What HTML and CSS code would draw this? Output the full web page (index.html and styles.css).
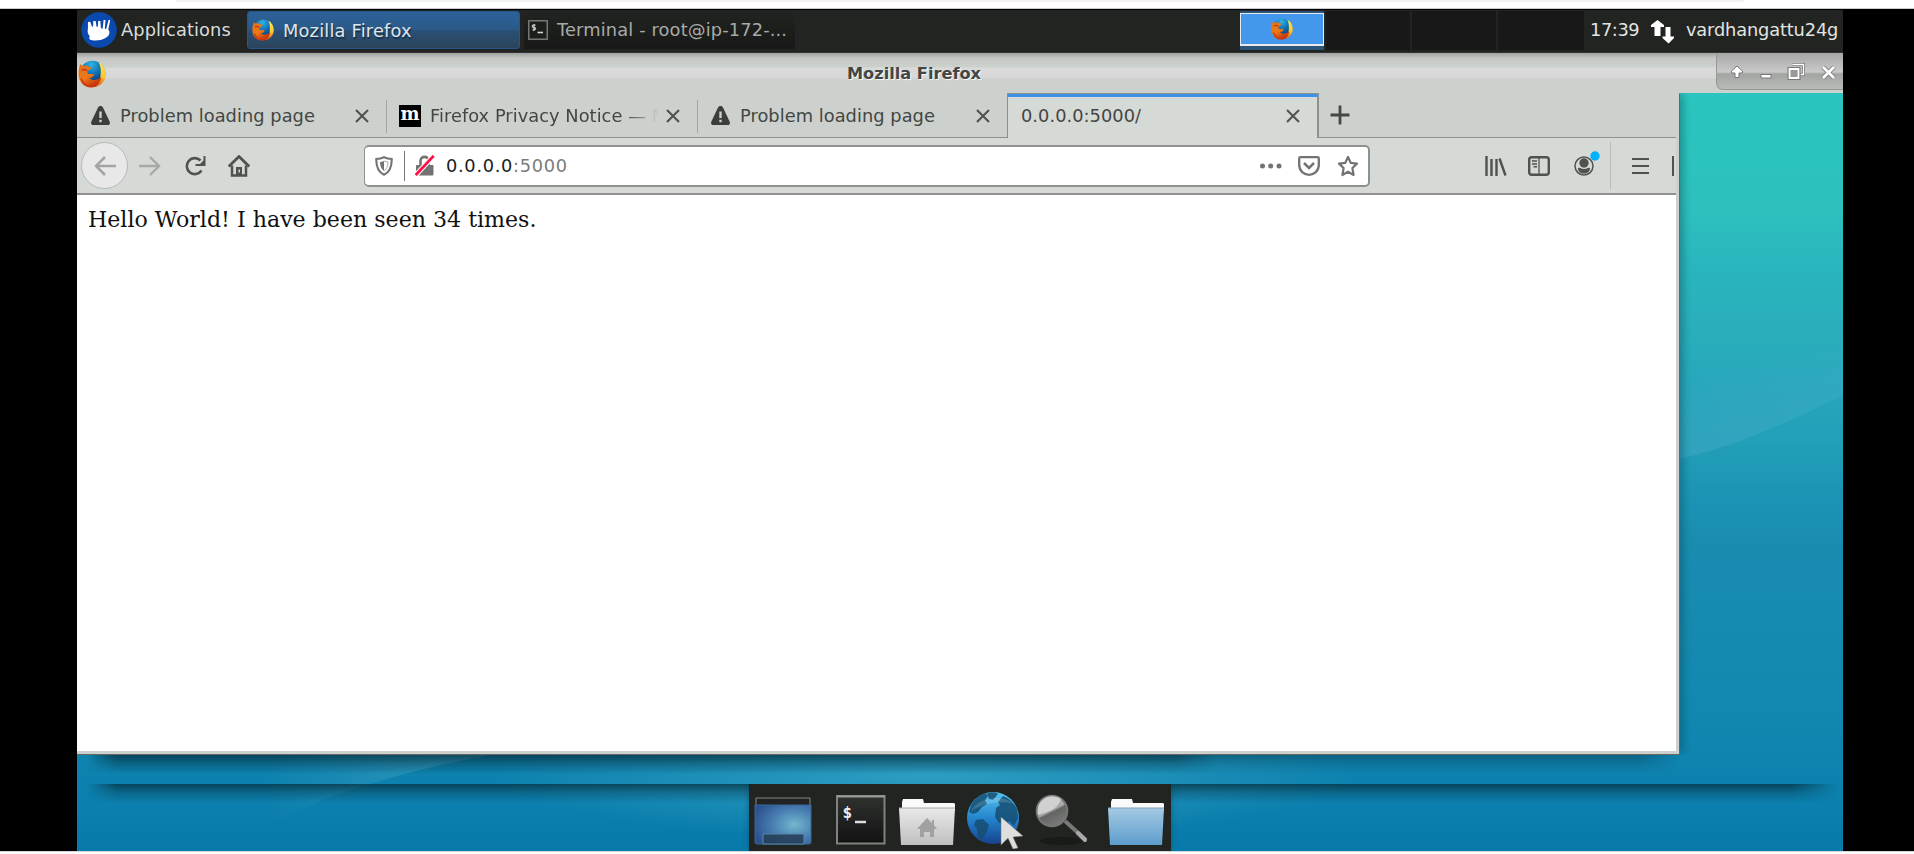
FILE: index.html
```html
<!DOCTYPE html>
<html lang="en">
<head>
<meta charset="utf-8">
<title>Mozilla Firefox</title>
<link rel="stylesheet" href="styles.css">
</head>
<body>
<svg width="0" height="0" class="defs" aria-hidden="true">
  <defs>
    <radialGradient id="fxBlue" cx=".45" cy=".15" r=".8"><stop offset="0" stop-color="#2fb5e6"/><stop offset=".5" stop-color="#0f6db0"/><stop offset="1" stop-color="#0a2c62"/></radialGradient>
    <linearGradient id="fxFire" x1="0" y1="0" x2=".6" y2="1"><stop offset="0" stop-color="#e0701c"/><stop offset=".55" stop-color="#ee7a16"/><stop offset="1" stop-color="#c2300f"/></linearGradient>
    <linearGradient id="fxTail" x1="0" y1="0" x2="0" y2="1"><stop offset="0" stop-color="#ffe95a"/><stop offset=".6" stop-color="#fbc52c"/><stop offset="1" stop-color="#dc4a12"/></linearGradient>
    <symbol id="firefox" viewBox="0 0 28 28">
      <circle cx="14.500" cy="13.500" r="12.800" fill="url(#fxBlue)"/>
      <path d="M20.500 2C28 6 30 16 25 22c-3 4-8 6-13 5 6-2 10-5 10.500-11C23 11 23 6 20.500 2z" fill="url(#fxTail)"/>
      <path d="M2.500 4L4.500 6C7 5 9 5.500 10.500 6.700L13.500 7c-.5 2-2 3-3.500 3.700l-.6 3.100c2 .8 4.500-.4 7 .8-1 1.800-2.400 3.400-5 3.600 2.600 2.600 8 2.400 12-1.200-1.200 6.500-5.500 11-11.500 10.500C5.500 27 .7 21.500.5 14.500.4 10.500 1 7 2.500 4z" fill="url(#fxFire)"/>
      <path d="M3 18.500c2 5.500 6 8 11 7.500M4 10c2-1 4-.5 5.500 1" fill="none" stroke="#c93511" stroke-width="1.500"/>
    </symbol>
    <symbol id="warn" viewBox="0 0 19 19">
      <path d="M9.500 0c1.300 0 2 .6 2.600 1.800l6.500 13.700c.8 1.900.1 3.500-1.800 3.500H2.200C.3 19-.4 17.400.4 15.500L6.900 1.800C7.500.6 8.200 0 9.500 0z" fill="#3a3f3b"/>
      <path d="M8.300 5.500h2.400v6.500H8.300zM8.300 13.700h2.400v2.500H8.300z" fill="#cdd1cd"/>
    </symbol>
    <symbol id="close" viewBox="0 0 14 14"><path d="M1 1l12 12M13 1L1 13" stroke="#505350" stroke-width="2.100" fill="none"/></symbol>
    <symbol id="smallterm" viewBox="0 0 20 20">
      <rect x=".8" y=".8" width="18.400" height="18.400" fill="#1c1e1c" stroke="#858785" stroke-width="1.300"/>
      <path d="M7.500 5.200H5.300c-1.300 0-1.300 2 0 2.200s2.400.2 2.200 1.400-.9 1-3 .9M6 4v7" stroke="#c4c6c4" stroke-width="1.300" fill="none"/><path d="M9.500 12.500h5.500" stroke="#d5d7d5" stroke-width="1.600"/>
    </symbol>
    <linearGradient id="white" x1="0" y1="0" x2="0" y2="1"><stop offset="0" stop-color="#e9e9e9"/><stop offset="1" stop-color="#bfbfbf"/></linearGradient>
    <linearGradient id="blue" x1="0" y1="0" x2="0" y2="1"><stop offset="0" stop-color="#a3cae3"/><stop offset="1" stop-color="#5d9dcd"/></linearGradient>
    <radialGradient id="desk" cx=".7" cy=".5" r=".75"><stop offset="0" stop-color="#72b9cc"/><stop offset=".5" stop-color="#4b80b4"/><stop offset="1" stop-color="#2b528f"/></radialGradient>
    <linearGradient id="earth" x1="0" y1="0" x2="0" y2="1"><stop offset="0" stop-color="#56c4ee"/><stop offset=".5" stop-color="#2485ce"/><stop offset="1" stop-color="#17418d"/></linearGradient>
    <linearGradient id="lens" x1=".2" y1="0" x2=".7" y2="1"><stop offset="0" stop-color="#d5d5d5"/><stop offset=".5" stop-color="#a5a5a5"/><stop offset=".56" stop-color="#626462"/><stop offset="1" stop-color="#7b7c7b"/></linearGradient>
    <linearGradient id="termbg" x1="0" y1="0" x2="0" y2="1"><stop offset="0" stop-color="#303230"/><stop offset="1" stop-color="#111211"/></linearGradient>
    <linearGradient id="rayR" gradientUnits="userSpaceOnUse" x1="1630" y1="442" x2="1610" y2="360"><stop offset="0" stop-color="#65b6d0" stop-opacity=".24"/><stop offset="1" stop-color="#65b6d0" stop-opacity="0"/></linearGradient>
    <linearGradient id="rayL" x1="0" y1="0" x2="1" y2="0"><stop offset="0" stop-color="#65b6d0" stop-opacity="0"/><stop offset="1" stop-color="#65b6d0" stop-opacity=".42"/></linearGradient>
    <radialGradient id="glow"><stop offset="0" stop-color="#39a6c8" stop-opacity=".75"/><stop offset="1" stop-color="#39a6c8" stop-opacity="0"/></radialGradient>
  </defs>
</svg>

<div class="strip"><div class="strip-bar"></div></div>
<div class="screen">
  <svg class="wallpaper" viewBox="0 0 1766 841" aria-hidden="true">
    <path d="M1603 449C1640 440 1690 424 1766 385V340H1603z" fill="url(#rayR)"/>
    <path d="M190 815C250 785 320 762 413 745L190 700z" fill="url(#rayL)"/>
    <ellipse cx="850" cy="765" rx="430" ry="65" fill="url(#glow)"/>
  </svg>

  <header class="panel">
    <div class="apps">
      <svg width="36" height="36" viewBox="0 0 36 36"><circle cx="18" cy="18" r="17.800" fill="#0b49ae"/><path d="M7 10l2.200-.3 1.800 5 1-.2L12.300 9h2.400l.8 5.800 1.300-.1L17.200 9h2.200l.5 7 1.700 1L22.600 8h1.900l-.7 8.800 1.400.3L27.500 8h1.700l-1.900 9.600c2.200 2.900 1.200 6-2.300 8.200-4 2.500-8 2.900-12.600 2.700-3.500-.2-4.800-1.200-3.700-4.200-2.100-3-2.500-4.400-1.800-7.300z" fill="#fff"/></svg>
      <span class="t-apps">Applications</span>
    </div>
    <div class="task active"><svg width="22" height="22"><use href="#firefox"/></svg><span>Mozilla Firefox</span></div>
    <div class="task"><svg width="20" height="20"><use href="#smallterm"/></svg><span class="t-term">Terminal - root@ip-172-...</span></div>
    <div class="pager">
      <div class="cell current"><div class="mini"><svg width="22" height="22"><use href="#firefox"/></svg></div></div>
      <div class="cell"></div><div class="cell"></div><div class="cell last"></div>
    </div>
    <span class="clock">17:39</span>
    <svg class="net" width="24" height="24" viewBox="0 0 24 24"><path d="M6.500 0l6.500 5v2H9.500v9h-6V7H0V5zM14.500 7h5v9.500H23V18l-5.500 5.500L11.500 18v-1.500h3z" fill="#fff"/></svg>
    <span class="user">vardhangattu24g</span>
  </header>

  <div class="titlebar">
    <svg class="ticon" width="28" height="28"><use href="#firefox"/></svg>
    <span class="title">Mozilla Firefox</span>
    <div class="controls">
      <svg width="14" height="14" viewBox="0 0 14 14"><path d="M7 1l5.500 5v2H9v4.500H5V8H1.500V6z" fill="#fff" stroke="#777" stroke-width="1"/></svg>
      <svg width="12" height="14" viewBox="0 0 12 14"><path d="M1 9.500h10v3.500H1z" fill="#fff" stroke="#777" stroke-width="1"/></svg>
      <svg width="18" height="18" viewBox="0 0 18 18"><path d="M5.500 1.500h11v10h-3" fill="none" stroke="#777" stroke-width="3"/><path d="M5.500 1.500h11v10h-3" fill="none" stroke="#fff" stroke-width="1.400"/><path d="M2.500 6h9v9h-9z" fill="none" stroke="#777" stroke-width="4"/><path d="M2.500 6h9v9h-9z" fill="#999" stroke="#fff" stroke-width="1.800"/></svg>
      <svg width="15" height="15" viewBox="0 0 15 15"><path d="M2 2l11 11M13 2L2 13" stroke="#777" stroke-width="4.500"/><path d="M2 2l11 11M13 2L2 13" stroke="#fff" stroke-width="2.800"/></svg>
    </div>
  </div>

  <main class="window">
    <div class="tabs">
      <div class="tab first"><svg width="19" height="19"><use href="#warn"/></svg><span>Problem loading page</span><svg class="x" width="14" height="14"><use href="#close"/></svg></div>
      <div class="tab second"><div class="moz">m</div><span class="fade">Firefox Privacy Notice — Mozilla</span><svg class="x" width="14" height="14"><use href="#close"/></svg></div>
      <div class="tab third"><svg width="19" height="19"><use href="#warn"/></svg><span>Problem loading page</span><svg class="x" width="14" height="14"><use href="#close"/></svg></div>
      <div class="tab selected"><span>0.0.0.0:5000/</span><svg class="x" width="14" height="14"><use href="#close"/></svg></div>
      <svg class="plus" width="20" height="20" viewBox="0 0 20 20"><path d="M10 .500v19M.5 10h19" stroke="#454845" stroke-width="2.800"/></svg>
    </div>
    <div class="nav">
      <div class="back"><svg width="22" height="20" viewBox="0 0 22 20"><path d="M22 10H2M11 1L2 10l9 9" fill="none" stroke="#a2a4a2" stroke-width="2.500"/></svg></div>
      <svg class="fwd" width="22" height="20" viewBox="0 0 22 20"><path d="M0 10h20M11 1l9 9-9 9" fill="none" stroke="#a6a9a6" stroke-width="2.400"/></svg>
      <svg class="reload" width="21" height="20" viewBox="0 0 21 20"><path d="M16.500 14.500A8 8 0 1 1 15.500 4.500" fill="none" stroke="#505250" stroke-width="2.600"/><path d="M19.500 0v9h-9" fill="none" stroke="#505250" stroke-width="2"/><path d="M20 3v6h-6z" fill="#505250"/></svg>
      <svg class="home" width="22" height="22" viewBox="0 0 22 22"><path d="M.8 11.500L11 1.500l10.200 10" fill="none" stroke="#505250" stroke-width="2.800"/><path d="M4 10.500v10h14v-10" fill="none" stroke="#505250" stroke-width="2.500"/><path d="M8 12h6v8H8z" fill="#505250"/><path d="M10.500 14.500h1.500v3h-1.500z" fill="#d6dad6"/></svg>
      <div class="url">
        <svg class="shield" width="18" height="20" viewBox="0 0 18 20"><path d="M9 1.200c2.500 1.200 4.800 1.700 7.700 1.800C16.900 10 15.500 15.500 9 18.700 2.500 15.500 1.100 10 1.300 3 4.200 2.900 6.500 2.400 9 1.200z" fill="none" stroke="#737373" stroke-width="2.100"/><path d="M9 5c-1.400.6-2.700.9-4 1 .1 4 1.200 7 4 8.900z" fill="#737373"/><path d="M9 5c1.400.6 2.700.9 4 1-.1 4-1.200 7-4 8.900" fill="none" stroke="#aaa" stroke-width="1"/></svg>
        <i class="rule"></i>
        <svg class="lock" width="20" height="21" viewBox="0 0 20 21"><path d="M5.500 10V6c0-5.500 8-5.500 8 0v4" fill="none" stroke="#737373" stroke-width="2.600"/><path d="M2 10h15.500c.8 0 1 .4 1 1v8c0 .8-.4 1.500-1.200 1.500H2c-.8 0-1-.5-1-1.200V11c0-.7.300-1 1-1z" fill="#737373"/><path d="M1 19.800L18.500 1" stroke="#fff" stroke-width="5"/><path d="M.7 20L18.700.8" stroke="#ff0f45" stroke-width="2.700"/></svg>
        <span class="addr">0.0.0.0<span class="port">:5000</span></span>
        <svg class="dots" width="22" height="6" viewBox="0 0 22 6"><circle cx="2.500" cy="3" r="2.500" fill="#737373"/><circle cx="10.700" cy="3" r="2.500" fill="#737373"/><circle cx="19" cy="3" r="2.500" fill="#737373"/></svg>
        <svg class="pocket" width="22" height="20" viewBox="0 0 22 20"><path d="M2.500 1.200h17c.8 0 1.300.5 1.300 1.300V9C20.800 15 16 18.800 11 18.800S1.200 15 1.200 9V2.500c0-.8.500-1.300 1.300-1.300z" fill="none" stroke="#737373" stroke-width="2.300"/><path d="M6 7l5 5 5-5" fill="none" stroke="#737373" stroke-width="2.500"/></svg>
        <svg class="star" width="22" height="22" viewBox="0 0 22 22"><path d="M11 2l2.700 5.800 6.300.8-4.600 4.400 1.200 7L11 16.800 5.400 20l1.200-7L2 8.600l6.300-.8z" fill="none" stroke="#737373" stroke-width="2.200" stroke-linejoin="round"/></svg>
      </div>
      <svg class="library" width="22" height="20" viewBox="0 0 22 20"><path d="M1.500 0v20M6.500 3v17M11.500 3v17M14.500 2.500l6 17" fill="none" stroke="#505250" stroke-width="2.400"/></svg>
      <svg class="side" width="22" height="20" viewBox="0 0 22 20"><rect x="1.200" y="1.200" width="19.600" height="17.600" rx="2.500" fill="none" stroke="#505250" stroke-width="2.400"/><path d="M11 1v18" stroke="#505250" stroke-width="1.300"/><path d="M4 5h5M4 8h5M5.500 10.700H9" stroke="#505250" stroke-width="1.400"/></svg>
      <svg class="account" width="26" height="25" viewBox="0 0 26 25"><circle cx="10" cy="15" r="9" fill="none" stroke="#505250" stroke-width="1.500"/><circle cx="10" cy="12" r="4.700" fill="#505250"/><path d="M4 17c2-1 3 1 6 1s4-2 6-1c0 4-3 5.500-6 5.500S4 21 4 17z" fill="#505250"/><circle cx="21" cy="5" r="4.700" fill="#00b3ff"/></svg>
      <i class="navrule"></i>
      <svg class="menu" width="17" height="18" viewBox="0 0 17 18"><path d="M0 2h17M0 9h17M0 16h17" stroke="#505250" stroke-width="2"/></svg>
      <i class="cut"></i>
    </div>
    <div class="page">Hello World! I have been seen 34 times.</div>
  </main>

  <div class="gap"><div class="shade wide"></div><div class="shade short"></div></div>
  <footer class="bottom">
    <div class="shade edge"></div>
    <div class="dock">
      <svg width="58" height="50" viewBox="0 0 58 50"><path d="M2 1h54v8H2z" fill="#222" stroke="#888" stroke-width="1"/><path d="M1 8h56v37q0 2-2 2H3q-2 0-2-2z" fill="url(#desk)" stroke="#3b6799"/><path d="M9 37h41v10H9z" fill="#263d55" fill-opacity=".85" stroke="#5789aa" stroke-width="1"/></svg>
      <svg class="d-term" width="50" height="50" viewBox="0 0 50 50"><rect x="1" y="1" width="47.500" height="47.500" fill="url(#termbg)" stroke="#808280" stroke-width="2"/><path d="M1 1.500h48" stroke="#9a9c9a" stroke-width="2"/><text x="6.500" y="23" class="dollar">$</text><path d="M19 27h11" stroke="#ddd" stroke-width="2.500"/></svg>
      <svg class="d-home" width="58" height="50" viewBox="0 0 58 50"><path d="M4 13V4l1-3h20l1 4h29q2 0 2 1v7z" fill="#fafafa"/><path d="M1 10h56l-2 37H3z" fill="url(#white)"/><path d="M1 10h56" stroke="#aaa"/><path d="M29 20l5 5v-3h2v5l3 4h-3v8h-4v-5h-6v5h-4v-8h-3z" fill="#a0a1a0"/></svg>
      <svg class="d-globe" width="56" height="58" viewBox="0 0 56 58"><circle cx="26" cy="27" r="26" fill="url(#earth)"/><path d="M4 14C8 7 14 3 19 2l2 3-3 4 2 4-5 3-4 5-5 2-4-2zM9 29l7-1 6 6-2 6-5 9-4-3-1-8-3-4zM20 2c4-1 9-1 11 1l-5 6-4-1zM29 17l4-3-2-3 5-6c6 2 11 7 14 13l1 9-4 8-5-5-3 3-7-1-4-6zM34 35l8 3-3 8-4-5z" fill="#154d72" fill-opacity=".85"/><path d="M4 20C10 7 35 2 47 13 37 9 16 12 4 20z" fill="#fff" fill-opacity=".15"/><path d="M34 26l22 19-10 1 5 11-5 1-5-11-7 7z" fill="#dededc" stroke="#777" stroke-width=".5"/></svg>
      <svg class="d-find" width="54" height="54" viewBox="0 0 54 54"><ellipse cx="26" cy="47" rx="21" ry="4" fill="#191b19"/><path d="M30 27l21 19" stroke="#777977" stroke-width="4"/><path d="M43 39l7 7" stroke="#aaa" stroke-width="4" stroke-linecap="round"/><circle cx="17" cy="17" r="15.300" fill="url(#lens)" stroke="#777" stroke-width="2"/><path d="M3 21C11 18 22 17 26 5 16-2 0 5 3 21z" fill="#d0d0d0"/></svg>
      <svg class="d-folder" width="58" height="50" viewBox="0 0 58 50"><path d="M4 13V4l1-3h20l1 4h29q2 0 2 1v7z" fill="#fafafa"/><path d="M1 10h56l-2 37H3z" fill="url(#blue)"/><path d="M1 10h56" stroke="#819fb4"/></svg>
    </div>
  </footer>
</div>
<div class="base"></div>
</body>
</html>
```
FILE: styles.css
```css
* { box-sizing: border-box; }
body {
  margin: 0;
  width: 1914px;
  height: 854px;
  overflow: hidden;
  background: #000;
  font: 17.8px/1 "DejaVu Sans", sans-serif;
  color: #434643;
  white-space: nowrap;
}
svg { display: block; flex: none; }
.defs { position: absolute; }
.strip { height: 9px; background: #fff; border-bottom: 1px solid #c9cbcd; }
.strip-bar { height: 2px; margin: 0 170px 0 175px; background: #f1f2f3; border-radius: 0 0 8px 8px; }
.screen {
  position: relative;
  width: 1766px;
  height: 841px;
  margin: 1px 0 0 77px;
  background: linear-gradient(#2ac5be 83px, #2dc0be 200px, #29b5bd 260px, #29adbb 330px, #26a5bc 385px, #229fb9 430px, #1c95b5 480px, #198db0 530px, #1288b0 700px, #0c80ae 790px, #077aaa 841px);
}
.wallpaper { position: absolute; inset: 0; width: 100%; height: 100%; }
.panel, .titlebar, .window, .gap, .bottom { position: relative; }

.panel {
  height: 43px;
  display: flex;
  align-items: center;
  padding-bottom: 3px;
  background: linear-gradient(#212421 41px, #171817 41px, #3c3e3c);
  color: #dadcda;
}
.apps { display: flex; align-items: center; gap: 4px; width: 170px; padding-left: 4px; }
.t-apps { letter-spacing: .1px; }
.task {
  display: flex;
  align-items: center;
  gap: 9px;
  width: 271px;
  height: 38px;
  padding: 0 4px;
  margin-right: 4px;
  color: #a8aaa8;
  background: linear-gradient(#212421, #171817);
}
.t-term { letter-spacing: .15px; }
.task.active { width: 273px; letter-spacing: .2px; color: #dfe4e8; border: 1px solid #23588e; border-radius: 3px; background: linear-gradient(#2b6198, #2c5a88 48%, #2a5077 52%, #2b445a); text-shadow: 1px 2px 1px #16304a; }
.active span { margin-top: 2px; }
.pager { display: flex; gap: 2px; margin-left: 441px; height: 39px; }
.cell { width: 84px; background: #181818; }
.cell.last { width: 86px; }
.cell.current { padding: 2px 0 4px; background: #2c5478; }
.mini { height: 33px; display: flex; align-items: center; justify-content: center; background: #4398ee; border: 1px solid #e8eaec; border-bottom-width: 2px; }
.clock { margin-left: 6px; width: 61px; letter-spacing: -.4px; color: #e2e4e2; }
.net { margin-top: 3px; margin-right: 11px; }
.user { letter-spacing: -.15px; color: #e2e4e2; }

.titlebar {
  height: 40px;
  display: grid;
  grid-template-columns: 770px 1fr 127px;
  background: linear-gradient(#9fa19f, #c4c7c4 5px, #cdd1cd 14px, #d9dad9 15px, #d7d7d7 25px, #cdd1cd 26px);
}
.ticon { margin: 7px 0 0 1px; }
.title { padding-top: 13px; font-weight: bold; font-size: 16.2px; text-shadow: 1px 1px 1px #fff; }
.controls {
  height: 37px;
  display: grid;
  grid-template-columns: 14px 12px 18px 15px;
  column-gap: 15.5px;
  align-items: center;
  padding: 2px 0 0 13px;
  border: solid #969896;
  border-width: 0 0 1px 1px;
  border-bottom-left-radius: 7px;
  background: linear-gradient(#a5a6a5, #bbbcbb 12px, #c8cac8 19px, #a3a5a3 21px, #b8bbb8 36px);
}

.window {
  width: 1602px;
  height: 661px;
  margin-bottom: 1px;
  border: solid #cdd1cd;
  border-width: 0 3px 3px 0;
  background: #fff;
  box-shadow: 1px 1px 0 #666866, 6px 0 8px -2px rgba(10, 60, 70, .4);
  clip-path: inset(0 -12px -1px 0);
}
.tabs {
  height: 45px;
  display: flex;
  background: #cdd1cd;
  border-bottom: 1px solid #8e908e;
}
.tab { display: flex; align-items: center; padding-top: 1px; letter-spacing: .05px; }
.tab .x { margin-left: auto; }
.first { width: 309px; padding-left: 14px; padding-right: 17px; gap: 10px; }
.second { width: 311px; padding-left: 13px; padding-right: 17px; gap: 9px; }
.third { width: 310px; padding-left: 14px; padding-right: 17px; gap: 10px; }
.second, .third { background: linear-gradient(#a3a5a3, #a3a5a3) 0 7px / 1px 33px no-repeat; }
.moz { width: 22px; height: 22px; background: #000; color: #fff; font: bold 18px/18px "DejaVu Serif", serif; text-align: center; }
.fade { width: 227px; overflow: hidden; line-height: 24px; -webkit-mask-image: linear-gradient(90deg, #000 196px, rgba(0, 0, 0, .1) 224px); mask-image: linear-gradient(90deg, #000 196px, rgba(0, 0, 0, .1) 224px); }
.selected {
  width: 312px;
  height: 45px;
  padding: 0 17px 0 13px;
  border: 1px solid #8e908e;
  border-right-width: 2px;
  border-bottom: 0;
  background: linear-gradient(#3d91e6 3px, #d6dad6 3px);
}
.plus { margin: 12px 0 0 11px; }
.nav {
  height: 57px;
  display: flex;
  align-items: center;
  background: #d6dad6;
  border-bottom: 2px solid #8f918f;
}
.back {
  width: 47px;
  height: 47px;
  margin-left: 4px;
  display: grid;
  place-items: center;
  border: 1px solid #b7b9b7;
  border-radius: 50%;
  background: #e7e8e7;
}
.fwd { margin-left: 11px; }
.reload { margin-left: 24px; }
.home { margin-left: 22px; }
.url {
  width: 1006px;
  height: 42px;
  margin-left: 114px;
  display: flex;
  align-items: center;
  background: #fff;
  border: 2px solid #8f918f;
  border-left-width: 1px;
  border-radius: 5px;
}
.shield { margin-left: 10px; }
.rule { width: 1px; height: 30px; margin-left: 11px; background: #777; }
.lock { margin-left: 10px; }
.addr { margin-left: 11px; width: 814px; color: #1b1d1b; letter-spacing: .7px; }
.port { color: #7b7d7b; }
.pocket { margin-left: 16px; }
.star { margin-left: 17px; }
.library { margin-left: 115px; }
.side { margin-left: 21px; }
.account { margin: -5px 0 0 24px; }
.navrule { width: 1px; height: 47px; margin-left: 10px; background: #b8bbb8; }
.menu { margin-left: 21px; }
.cut { width: 2px; height: 20px; margin-left: 23px; background: #505250; }
.page { padding: 12px 0 0 11px; font: 22.1px/24px "DejaVu Serif", serif; color: #111; }

.gap { height: 29px; }
.shade { height: 19px; background: linear-gradient(rgba(5, 42, 55, .7), rgba(5, 42, 55, .3) 45%, transparent); }
.wide { margin: 0 163px 0 10px; opacity: .55; -webkit-mask-image: linear-gradient(90deg, transparent, #000 30px, #000 1550px, transparent); mask-image: linear-gradient(90deg, transparent, #000 30px, #000 1550px, transparent); }
.short { width: 1130px; margin: -19px 0 0 10px; opacity: .7; -webkit-mask-image: linear-gradient(90deg, transparent, #000 30px, #000 1090px, transparent); mask-image: linear-gradient(90deg, transparent, #000 30px, #000 1090px, transparent); }
.bottom { height: 67px; }
.edge { margin: 0 5px 0 10px; -webkit-mask-image: linear-gradient(90deg, transparent, #000 30px, #000 1705px, transparent); mask-image: linear-gradient(90deg, transparent, #000 30px, #000 1705px, transparent); }
.dock {
  position: relative;
  width: 422px;
  height: 67px;
  margin: -19px auto 0;
  padding-left: 5px;
  display: flex;
  align-items: flex-start;
  background: #212421;
  box-shadow: 0 0 6px rgba(0, 50, 65, .4);
  clip-path: inset(0 -8px 0 -8px);
}
.dock svg { margin-top: 13px; }
.dock .d-term { margin: 11px 0 0 24px; }
.dollar { font: bold 16px "DejaVu Sans Mono", monospace; fill: #eee; }
.dock .d-home { margin: 14px 0 0 12px; }
.dock .d-globe { margin: 7px 0 0 11px; }
.dock .d-find { margin: 10px 0 0 12px; }
.dock .d-folder { margin: 14px 0 0 18px; }
.base { height: 3px; background: #fff; border-top: 1px solid #d5d7d9; }
```
